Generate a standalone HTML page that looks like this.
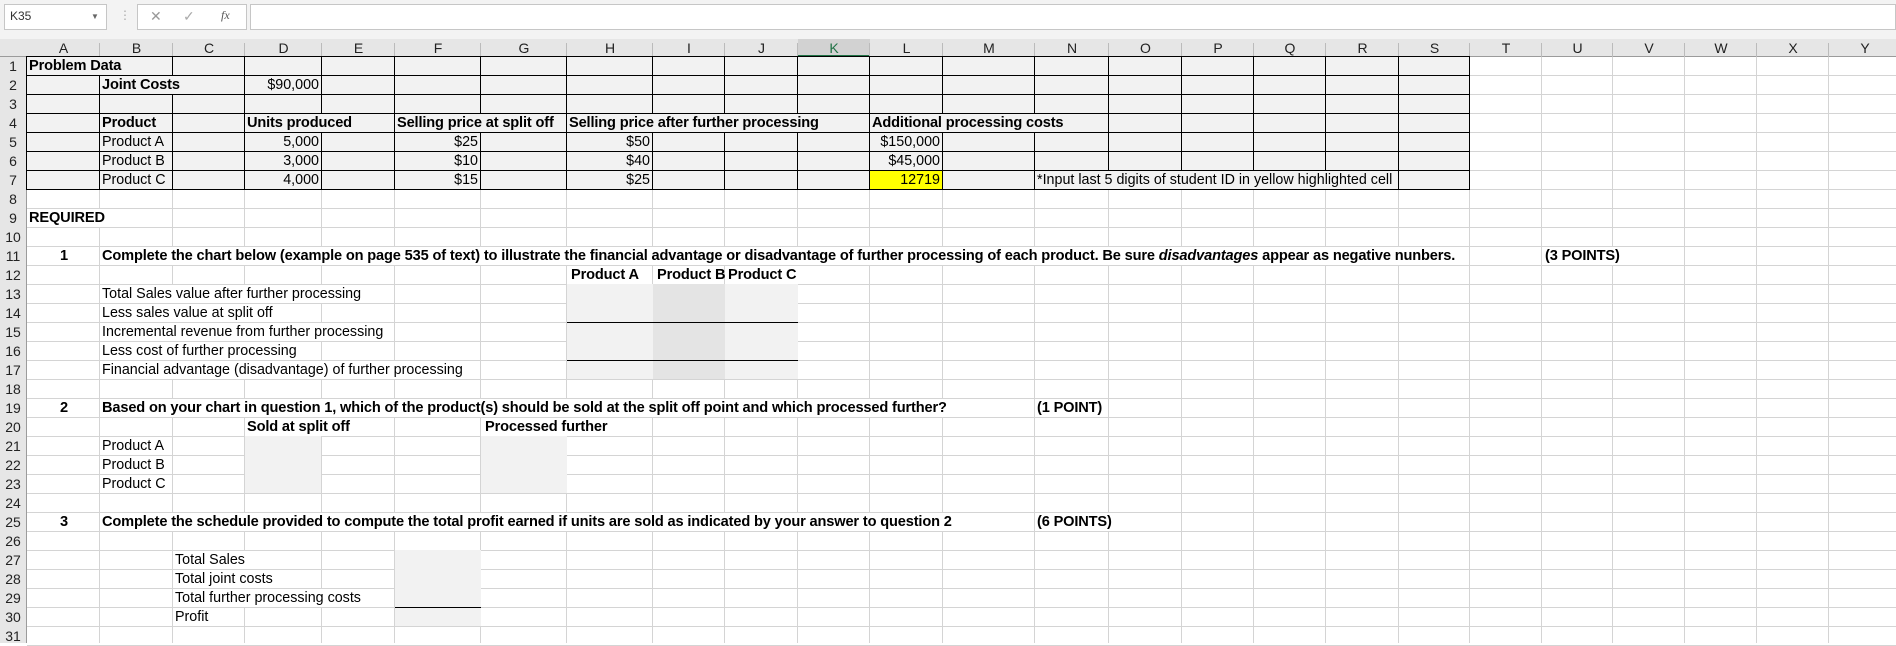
<!DOCTYPE html>
<html><head><meta charset="utf-8">
<style>
*{margin:0;padding:0;box-sizing:border-box}
body{width:1896px;height:643px;overflow:hidden;background:#fff;position:relative;font-family:"Liberation Sans",Arial,sans-serif;font-size:14.3px;color:#000}
.a{position:absolute}
.t{position:absolute;white-space:nowrap;line-height:19px;height:18px}
.w{background:#fff;padding-right:2px}
.b{font-weight:bold;font-size:14.6px;letter-spacing:-0.15px}
.r{text-align:right}
.hl{position:absolute;height:1px}
.vl{position:absolute;width:1px}
</style></head><body>
<div class="a" style="left:0;top:0;width:1896px;height:39px;background:#f3f3f3"></div>
<div class="a" style="left:4px;top:4px;width:103px;height:26px;background:#fff;border:1px solid #c6c6c6"></div>
<div class="t" style="left:10px;top:7px;font-size:12px;color:#333">K35</div>
<div class="t" style="left:91px;top:7px;font-size:8px;color:#666">▼</div>
<div class="t" style="left:119px;top:6px;font-size:12px;color:#aaa">⋮</div>
<div class="a" style="left:137px;top:4px;width:110px;height:26px;background:#fff;border:1px solid #c6c6c6"></div>
<div class="t" style="left:150px;top:7px;font-size:14px;color:#999">✕</div>
<div class="t" style="left:183px;top:7px;font-size:14px;color:#aaa">✓</div>
<div class="t" style="left:221px;top:6px;font-size:12px;font-style:italic;font-family:'Liberation Serif',serif;color:#555">fx</div>
<div class="a" style="left:250px;top:4px;width:1646px;height:26px;background:#fff;border:1px solid #c6c6c6"></div>
<div class="a" style="left:0;top:39px;width:1896px;height:18px;background:#e6e6e6;border-bottom:1px solid #9b9b9b"></div>
<div class="a" style="left:0;top:57px;width:27px;height:586px;background:#e6e6e6;border-right:1px solid #9b9b9b"></div>
<div id="g"></div>
<script>
var X=[27,100,173,245,322,395,481,567,653,725,798,870,943,1035,1109,1182,1254,1326,1399,1470,1542,1613,1685,1757,1829,1901];
var L="ABCDEFGHIJKLMNOPQRSTUVWXY";
var h="";
function R(n){return 57+19*(n-1);}
function box(x,y,w,hh,c){h+='<div class="a" style="left:'+x+'px;top:'+y+'px;width:'+w+'px;height:'+hh+'px;background:'+c+'"></div>';}
for(var i=1;i<X.length;i++){h+='<div class="vl" style="left:'+(X[i]-1)+'px;top:57px;height:586px;background:#d4d4d4"></div>';}
for(var r=1;r<=31;r++){h+='<div class="hl" style="left:27px;top:'+(R(r)+18)+'px;width:1869px;background:#d4d4d4"></div>';}
for(var i=0;i<25;i++){var c=L[i];h+='<div class="t" style="left:'+X[i]+'px;top:39px;width:'+(X[i+1]-X[i])+'px;text-align:center;font-size:14px;color:#222;'+(c=="K"?'background:#d2d2d2;border-bottom:2px solid #217346;color:#217346;height:18px;line-height:18px':'line-height:18px')+'">'+c+'</div>';
 if(i>0)h+='<div class="vl" style="left:'+(X[i]-1)+'px;top:43px;height:14px;background:#bbb"></div>';}
for(var r=1;r<=31;r++){h+='<div class="t" style="left:0;top:'+R(r)+'px;width:26px;text-align:center;font-size:14px;color:#222">'+r+'</div>';}
box(27,R(1),1443,19*7,"#f2f2f2");
box(870,R(7),72,18,"#ffff00");
for(var r=1;r<=8;r++){h+='<div class="hl" style="left:27px;top:'+(R(r)-1)+'px;width:1443px;background:#000"></div>';}
var skip={1:[100],2:[173],3:[],4:[322,481,653,725,798,943,1035],5:[],6:[],7:[1109,1182,1254,1326]};
for(var r=1;r<=7;r++){for(var i=0;i<=19;i++){if(skip[r].indexOf(X[i])>=0)continue;h+='<div class="vl" style="left:'+(X[i]-1)+'px;top:'+(R(r)-1)+'px;height:20px;background:#000"></div>';}}
box(567,R(13)-1,231,95,"#f2f2f2");box(653,R(13)-1,72,95,"#e4e4e4");
h+='<div class="hl" style="left:567px;top:'+(R(15)-1)+'px;width:231px;background:#000"></div>';
h+='<div class="hl" style="left:567px;top:'+(R(17)-1)+'px;width:231px;background:#000"></div>';
box(245,R(21)-1,76,57,"#f2f2f2");box(481,R(21)-1,86,57,"#f2f2f2");
box(395,R(27)-1,86,76,"#f2f2f2");
h+='<div class="hl" style="left:395px;top:'+(R(30)-1)+'px;width:86px;background:#000"></div>';
function T(x,r,s,cls,w){h+='<div class="t '+(cls||"")+'" style="left:'+x+'px;top:'+R(r)+'px;'+(w?'width:'+w+'px;':'')+'">'+s+'</div>';}
function RT(xr,r,s){h+='<div class="t r" style="left:'+(xr-90)+'px;top:'+R(r)+'px;width:87px">'+s+'</div>';}
T(29,1,"Problem Data","b");
T(102,2,"Joint Costs","b");RT(322,2,"$90,000");
T(102,4,"Product","b");T(247,4,"Units produced","b");T(397,4,"Selling price at split off","b");T(569,4,"Selling price after further processing","b");T(872,4,"Additional processing costs","b");
T(102,5,"Product A");T(102,6,"Product B");T(102,7,"Product C");
RT(322,5,"5,000");RT(322,6,"3,000");RT(322,7,"4,000");
RT(481,5,"$25");RT(481,6,"$10");RT(481,7,"$15");
RT(653,5,"$50");RT(653,6,"$40");RT(653,7,"$25");
RT(943,5,"$150,000");RT(943,6,"$45,000");RT(943,7,"12719");
T(1037,7,"*Input last 5 digits of student ID in yellow highlighted cell","","",);
T(29,9,"REQUIRED","b w");
T(60,11,"1","b");T(102,11,"Complete the chart below (example on page 535 of text) to illustrate the financial advantage or disadvantage of further processing of each product. Be sure <i>disadvantages</i> appear as negative nunbers.","b w");
T(1545,11,"(3 POINTS)","b w");
T(571,12,"Product A","b");T(657,12,"Product B","b");T(728,12,"Product C","b w");
T(102,13,"Total Sales value after further processing","w");T(102,14,"Less sales value at split off","w");T(102,15,"Incremental revenue from further processing","w");T(102,16,"Less cost of further processing","w");T(102,17,"Financial advantage (disadvantage) of further processing","w");
T(60,19,"2","b");T(102,19,"Based on your chart in question 1, which of the product(s) should be sold at the split off point and which processed further?","b w");T(1037,19,"(1 POINT)","b w");
T(247,20,"Sold at split off","b w");T(485,20,"Processed further","b w");
T(102,21,"Product A");T(102,22,"Product B");T(102,23,"Product C");
T(60,25,"3","b");T(102,25,"Complete the schedule provided to compute the total profit earned if units are sold as indicated by your answer to question 2","b w");T(1037,25,"(6 POINTS)","b w");
T(175,27,"Total Sales","w");T(175,28,"Total joint costs","w");T(175,29,"Total further processing costs","w");T(175,30,"Profit","w");
document.getElementById("g").innerHTML=h;
</script>
</body></html>
